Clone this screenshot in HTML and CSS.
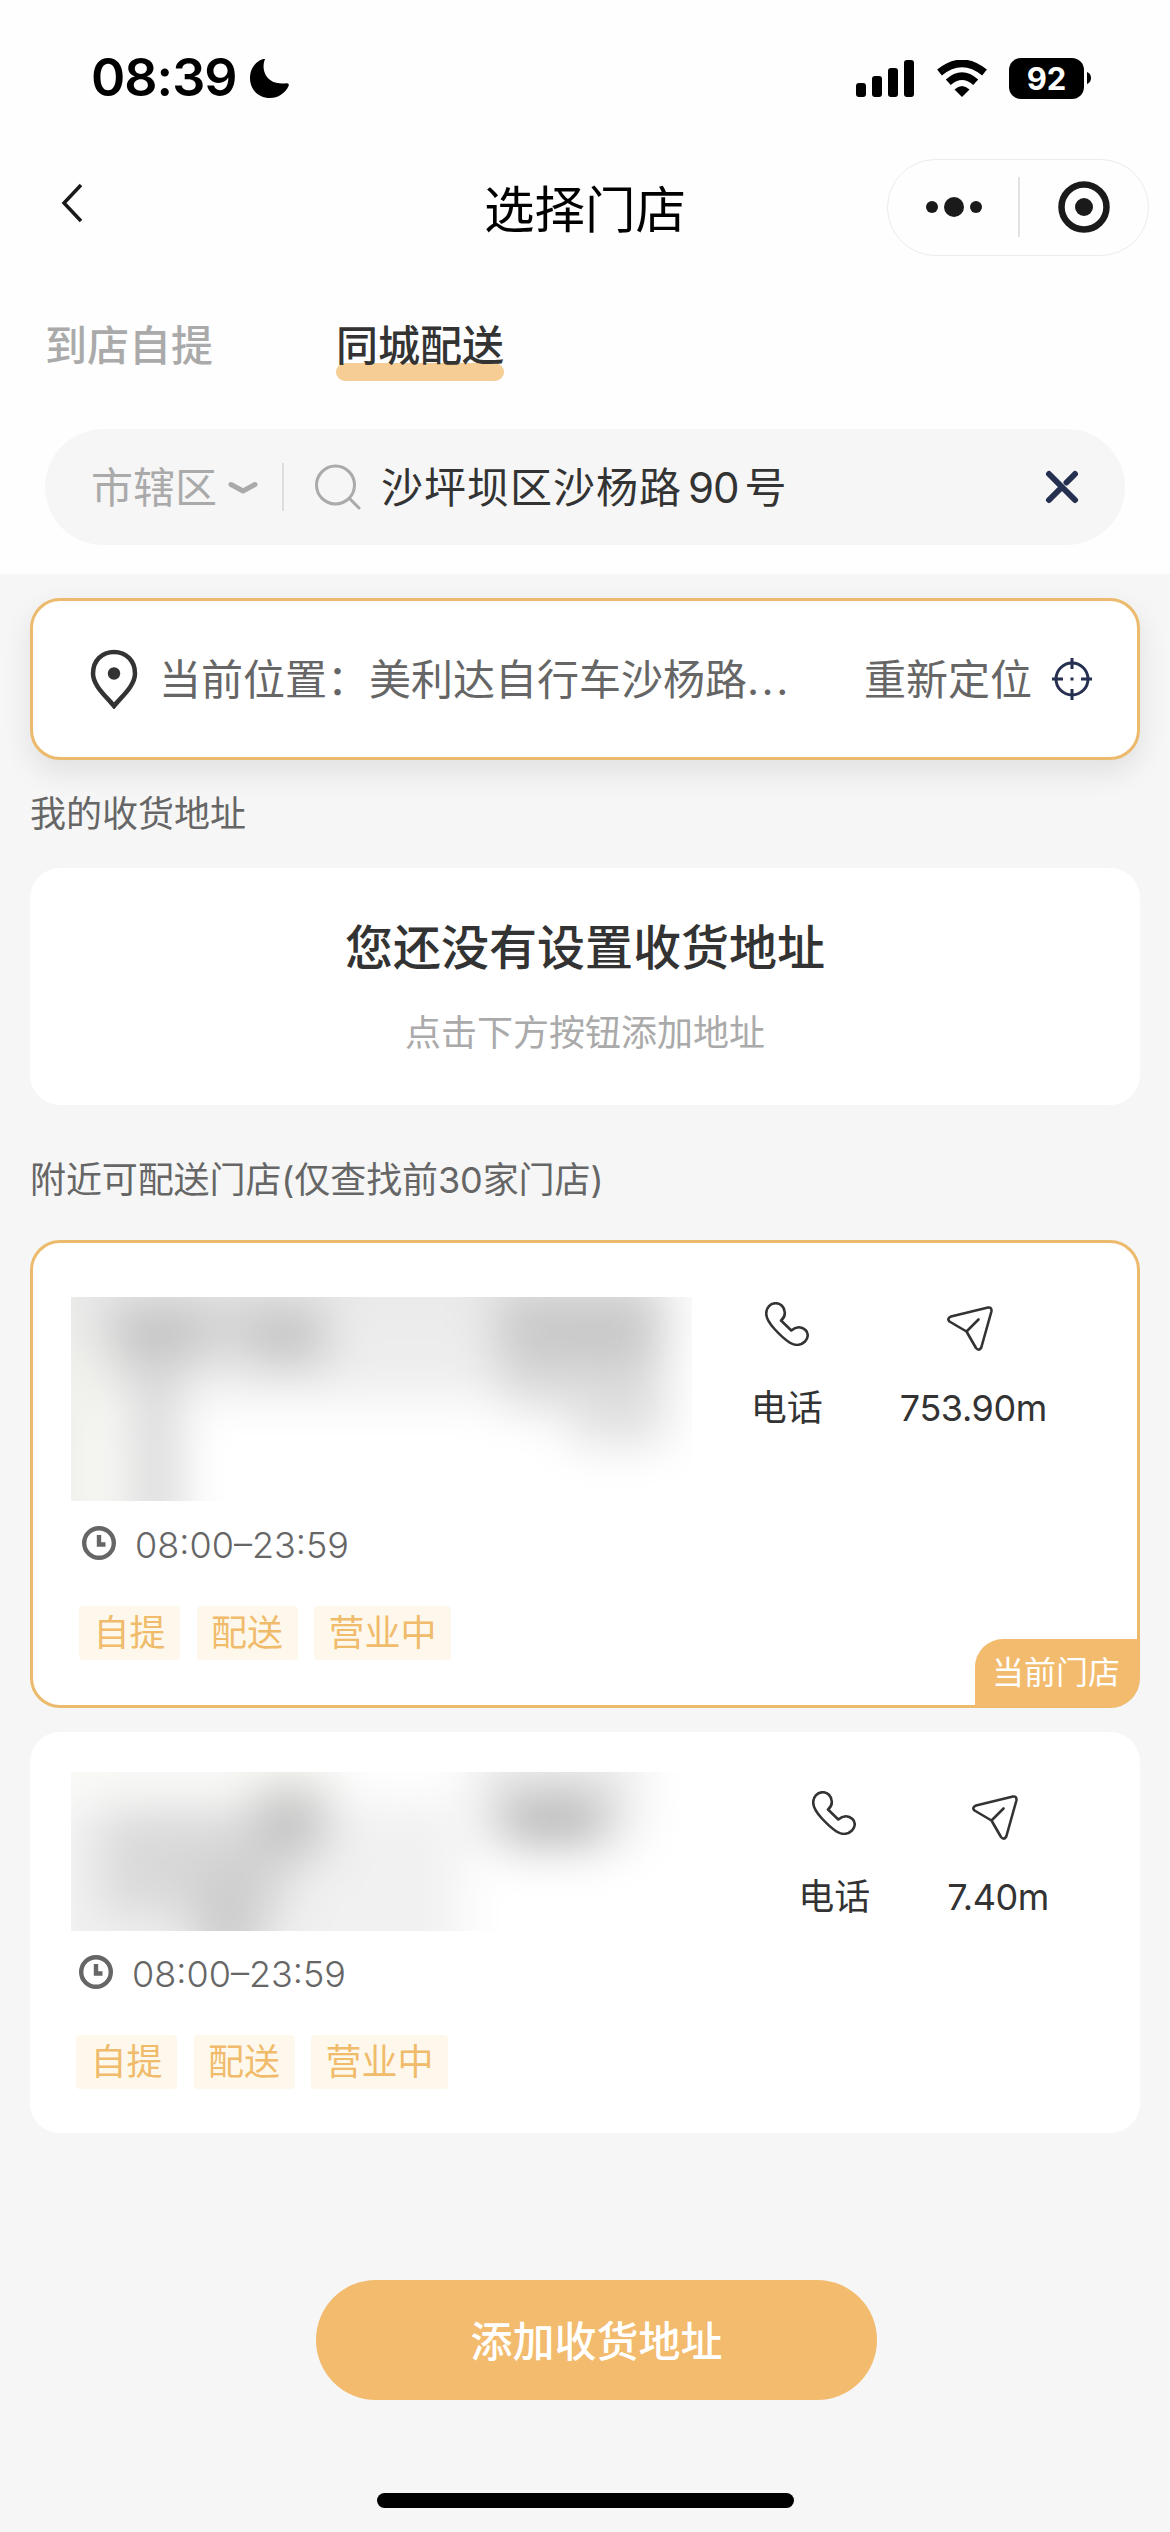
FILE: index.html
```html
<!DOCTYPE html>
<html lang="zh-CN">
<head>
<meta charset="utf-8">
<title>选择门店</title>
<link rel="stylesheet" href="styles.css">
</head>
<body>
<svg width="0" height="0" class="defs">
  <filter id="soft" x="-100%" y="-100%" width="300%" height="300%"><feGaussianBlur stdDeviation="24"/></filter>
  <symbol id="phone" viewBox="0 0 44 44"><path d="M16 18.500C19 16 20 13.500 19.800 10.500C19.500 5 15.500 1.200 10.800 1.200C5.500 1.200 1.200 5.500 1.200 11.500C1.200 17 5 22 9.500 27C15 33 20 37.500 24.500 40.500C30 44 36 43.500 40 39.500C43.500 36 43.600 31 40.500 28C36.500 24.300 31 24.500 26.300 28.500Z"/></symbol>
  <symbol id="send" viewBox="0 0 46 46"><path d="M41 1.500L4 10.500Q-.5 12.500 2.500 15.500L19.500 25.500L29 42Q32 45.500 34.300 41.500L44.400 5.500Q45 1 41 1.500ZM19.500 25.500L31.500 13.500"/></symbol>
  <symbol id="clock" viewBox="0 0 34 34"><circle cx="17" cy="17" r="14.800"/><path d="M17 9V18.500H23.500"/></symbol>
</svg>
<div class="screen">
  <header class="top">
    <div class="status">
      <div class="time"><span>08:39</span>
        <svg width="39" height="39" viewBox="0 0 39 39"><path d="M15 .3C11 9 14.500 27 36.500 24.300Q39.500 24 38.600 27C35 34.500 28 39 20 39C9 39 0 31 0 19C0 10 5 3 12.500 .2Q15 -.6 15 .3Z"/></svg>
      </div>
      <div class="signals">
        <svg width="58" height="37" viewBox="0 0 58 37"><rect y="23" width="10" height="14" rx="3"/><rect x="16" y="16" width="10" height="21" rx="3"/><rect x="32" y="8" width="10" height="29" rx="3"/><rect x="48" width="10" height="37" rx="3"/></svg>
        <svg class="wifi" width="50" height="37" viewBox="0 0 50 37"><path d="M25 37L17.500 29.500Q25 22.500 32.500 29.500Z"/><path class="arc" d="M11.300 22.300Q25 10 38.700 22.300M2.500 12.500Q25 -5.800 47.500 12.500"/></svg>
        <div class="battery"><span>92</span><svg width="4" height="12" viewBox="0 0 4 12"><path d="M0 0Q4 1.500 4 6Q4 10.500 0 12Z"/></svg></div>
      </div>
    </div>
    <nav class="nav">
      <svg class="back" width="22" height="40" viewBox="0 0 22 40"><path d="M20 2L3 20L20 38"/></svg>
      <h1>选择门店</h1>
      <div class="capsule">
        <svg width="56" height="22" viewBox="0 0 56 22"><circle cx="6" cy="11" r="6"/><circle cx="28" cy="11" r="10"/><circle cx="50" cy="11" r="6"/></svg>
        <i></i>
        <svg width="52" height="52" viewBox="0 0 52 52"><circle class="ring" cx="26" cy="26" r="22.500"/><circle cx="26" cy="26" r="9"/></svg>
      </div>
    </nav>
    <div class="tabs"><span>到店自提</span><span class="active">同城配送</span></div>
    <div class="search">
      <span class="area">市辖区</span>
      <svg class="chev" width="30" height="13" viewBox="0 0 30 13"><path d="M3 3.500L15 10L27 3.500"/></svg>
      <i></i>
      <svg class="glass" width="46" height="46" viewBox="0 0 46 46"><circle cx="20.500" cy="21" r="19"/><path d="M34.500 34.500L44 44"/></svg>
      <span class="query">沙坪坝区沙杨路<b>90</b>号</span>
      <svg class="clear" width="34" height="34" viewBox="0 0 34 34"><path d="M4 4L30 30M4 30L16 18M21.500 12.500L30 4"/></svg>
    </div>
  </header>
  <main>
    <section class="location">
      <svg class="pin" width="48" height="60" viewBox="0 0 48 60"><path d="M24 57C17 48 3 37 3 24.500C3 11.500 12 3 24 3S45 11.500 45 24.500C45 37 31 48 24 57Z"/><circle cx="24" cy="24.500" r="6.200"/></svg>
      <span class="place">当前位置：美利达自行车沙杨路<em>...</em></span>
      <span class="relocate">重新定位</span>
      <svg class="target" width="40" height="42" viewBox="0 0 40 42"><circle cx="20" cy="21" r="16"/><path d="M20 0V11M20 31V42M0 21H11M29 21H40M18.500 21H21.500"/></svg>
    </section>
    <h2>我的收货地址</h2>
    <section class="empty"><strong>您还没有设置收货地址</strong><span>点击下方按钮添加地址</span></section>
    <h2 class="near">附近可配送门店(仅查找前30家门店)</h2>
    <section class="store current">
      <div class="info">
        <svg class="redacted" width="621" height="204" viewBox="0 0 621 204">
          <rect width="621" height="204" fill="#fff"/>
          <g filter="url(#soft)">
            <rect x="-60" y="-60" width="95" height="330" fill="#f1f1ec"/>
            <rect x="-20" y="-60" width="620" height="110" fill="#e9e9e9"/>
            <rect x="30" y="20" width="500" height="80" fill="#ededed"/>
            <rect x="40" y="5" width="90" height="60" fill="#c2c2c2"/>
            <rect x="130" y="0" width="60" height="60" fill="#d6d6d6"/>
            <rect x="180" y="8" width="75" height="60" fill="#c2c2c2"/>
            <rect x="62" y="60" width="45" height="190" fill="#d6d6d6"/>
            <rect x="425" y="-5" width="165" height="80" fill="#c8c8c8"/>
            <rect x="435" y="60" width="60" height="50" fill="#d8d8d8"/>
            <rect x="500" y="70" width="95" height="75" fill="#dedede"/>
          </g>
        </svg>
        <div class="hours"><svg width="34" height="34"><use href="#clock"/></svg>08:00–23:59</div>
        <div class="tags"><span>自提</span><span>配送</span><span>营业中</span></div>
      </div>
      <div class="actions">
        <div><svg width="44" height="44"><use href="#phone"/></svg><span>电话</span></div>
        <div class="go"><svg width="46" height="46"><use href="#send"/></svg><span>753.90m</span></div>
      </div>
      <div class="badge">当前门店</div>
    </section>
    <section class="store other">
      <div class="info">
        <svg class="redacted" width="621" height="159" viewBox="0 0 621 159">
          <rect width="621" height="159" fill="#fff"/>
          <g filter="url(#soft)">
            <rect x="-60" y="-60" width="330" height="70" fill="#f8f8f4"/>
            <rect x="-30" y="30" width="420" height="200" fill="#f1f1f1"/>
            <rect x="30" y="35" width="190" height="110" fill="#d9d9d9"/>
            <rect x="185" y="15" width="70" height="70" fill="#c2c2c2"/>
            <rect x="125" y="95" width="65" height="100" fill="#cbcbcb"/>
            <rect x="400" y="-40" width="170" height="110" fill="#ededed"/>
            <rect x="430" y="22" width="105" height="50" fill="#b4b4b4"/>
          </g>
        </svg>
        <div class="hours"><svg width="34" height="34"><use href="#clock"/></svg>08:00–23:59</div>
        <div class="tags"><span>自提</span><span>配送</span><span>营业中</span></div>
      </div>
      <div class="actions">
        <div><svg width="44" height="44"><use href="#phone"/></svg><span>电话</span></div>
        <div class="go"><svg width="46" height="46"><use href="#send"/></svg><span>7.40m</span></div>
      </div>
    </section>
    <button class="add">添加收货地址</button>
    <div class="home"></div>
  </main>
</div>
</body>
</html>
```
FILE: styles.css
```css
* { box-sizing: border-box; }
body { margin: 0; background: #f6f6f6; font-family: Inter, "Noto Sans CJK SC", sans-serif; color: #333; }
svg { display: block; flex: none; }
.defs { position: absolute; }
.screen { width: 1170px; height: 2532px; overflow: hidden; background: #f6f6f6; }
.top { height: 574px; background: #fefefe; }

.status { height: 156px; padding: 57px 79px 0 91px; display: flex; justify-content: space-between; }
.time { display: flex; gap: 16px; height: 42px; align-items: center; font-size: 52px; font-weight: 600; line-height: 42px; color: #000; }
.time span { width: 143px; white-space: nowrap; letter-spacing: -1px; }
.signals { display: flex; height: 42px; align-items: center; }
.wifi { margin: 0 22px 0 23px; }
.wifi .arc { fill: none; stroke: #000; stroke-width: 7.500; }
.battery { display: flex; align-items: center; gap: 3px; }
.battery span { width: 75px; height: 41px; border-radius: 12px; background: #000; color: #fff; font-size: 31px; font-weight: 700; line-height: 42px; text-align: center; }

.nav { height: 102px; padding: 0 21px 0 61px; display: grid; grid-template-columns: 423px 200px 1fr; align-items: center; }
.back { fill: none; stroke: #1a1a1a; stroke-width: 3.500; margin-top: -8px; }
.nav h1 { margin: 0; padding-top: 5px; font-size: 50.500px; font-weight: 400; line-height: 60px; white-space: nowrap; color: #000; }
.capsule { justify-self: end; width: 262px; height: 97px; border: 1px solid #ebebeb; border-radius: 49px; display: flex; align-items: center; padding-left: 38px; fill: #1a1a1a; }
.capsule i { width: 2px; height: 60px; background: #e2e2e2; margin: 0 38px 0 36px; }
.capsule .ring { fill: none; stroke: #1a1a1a; stroke-width: 6.500; }

.tabs { display: flex; gap: 123px; height: 171px; padding: 58px 46px 0 45px; font-size: 42px; font-weight: 500; line-height: 60px; color: #aaa; }
.tabs span { height: 65px; }
.tabs .active { color: #333; position: relative; isolation: isolate; }
.tabs .active::after { content: ""; position: absolute; left: 0; right: 0; bottom: 0; height: 18px; border-radius: 9px; background: #f6ce95; z-index: -1; }
.search { margin: 0 45px; height: 116px; border-radius: 58px; background: #f6f6f6; display: flex; align-items: center; padding: 0 46px; font-size: 42px; color: #aaa; }
.area, .query, .place, .relocate { padding-bottom: 5px; }
.area { width: 126px; }
.chev { margin-left: 11px; fill: none; stroke: #aaa; stroke-width: 5; stroke-linecap: round; stroke-linejoin: round; }
.search i { width: 2px; height: 48px; background: #ddd; margin: 0 31px 0 24px; }
.glass { fill: none; stroke: #aaa; stroke-width: 3; stroke-linecap: round; }
.query { margin-left: 20px; flex: 1; letter-spacing: 1px; color: #333; }
.query b { font-weight: 400; margin: 0 6px 0 6px; letter-spacing: -1px; }
.clear { fill: none; stroke: #252f4f; stroke-width: 6; stroke-linecap: round; }

main { padding: 24px 30px 0; display: flex; flex-direction: column; }
.location { height: 162px; border: 3px solid #ecba6c; border-radius: 30px; background: #fff; box-shadow: 0 12px 30px rgba(0,0,0,.09); display: flex; align-items: center; padding: 0 45px 0 57px; font-size: 42px; color: #666; }
.pin { fill: none; stroke: #333; stroke-width: 4.500; }
.pin circle { fill: #333; stroke: none; }
.place { margin-left: 21px; width: 705px; white-space: nowrap; }
.place em { font-style: normal; letter-spacing: 2.500px; }
.target { margin-left: 20px; fill: none; stroke: #252f4f; stroke-width: 3; }
h2 { margin: 27px 0 0; font-size: 36px; line-height: 54px; font-weight: 400; color: #666; }
.empty { margin-top: 27px; height: 237px; border-radius: 30px; background: #fff; display: flex; flex-direction: column; align-items: center; padding-top: 44px; }
.empty strong { font-size: 48px; line-height: 72px; font-weight: 500; }
.empty span { margin-top: 22px; font-size: 36px; line-height: 54px; color: #aaa; }
h2.near { margin-top: 48px; letter-spacing: -.1px; }

.store { position: relative; background: #fff; border: 3px solid #fff; border-radius: 30px; display: flex; justify-content: space-between; padding-left: 38px; }
.current { height: 468px; margin-top: 33px; border-color: #ecba6c; padding-top: 54px; }
.other { height: 401px; margin-top: 24px; padding-top: 37px; }
.redacted { overflow: hidden; }
.hours { display: flex; align-items: center; gap: 19px; height: 48px; font-size: 36px; font-weight: 300; color: #666; }
.hours svg { fill: none; stroke: #666; stroke-width: 4.400; margin-top: -4px; }
.tags { display: flex; gap: 16.500px; }
.tags span { height: 54px; padding: 0 14.500px; background: #fef8ec; border-radius: 4px; color: #f0bb6a; font-size: 36px; line-height: 54px; }
.current .hours { margin: 20px 0 0 11px; }
.current .tags { margin: 37px 0 0 8px; }
.other .hours { margin: 19px 0 0 8px; }
.other .tags { margin: 37px 0 0 5px; }
.actions { display: flex; gap: 77px; padding: 5px 90px 0 0; font-size: 36px; line-height: 54px; }
.actions div { display: flex; flex-direction: column; align-items: center; }
.actions svg { fill: none; stroke: #333; stroke-width: 2.600; stroke-linejoin: round; stroke-linecap: round; }
.actions span { margin-top: 35px; }
.actions .go svg { margin: 4px 7px 0 0; }
.actions .go span { margin-top: 29px; letter-spacing: -.4px; }
.other .actions { padding: 19px 88px 0 0; }
.badge { position: absolute; right: -2px; bottom: -2px; width: 164px; height: 68px; border-radius: 28px 0 28px 0; background: #f2bb6d; color: #fff; font-size: 32px; line-height: 67px; text-align: center; padding-right: 2px; }
.add { margin: 147px 0 0 286px; width: 561px; height: 120px; border: 0; border-radius: 60px; background: #f2bb6d; color: #fff; font: 500 42px/120px Inter, "Noto Sans CJK SC", sans-serif; padding: 2px 0 0; }
.home { margin: 93px 0 0 347px; width: 417px; height: 15px; border-radius: 8px; background: #000; }
```
